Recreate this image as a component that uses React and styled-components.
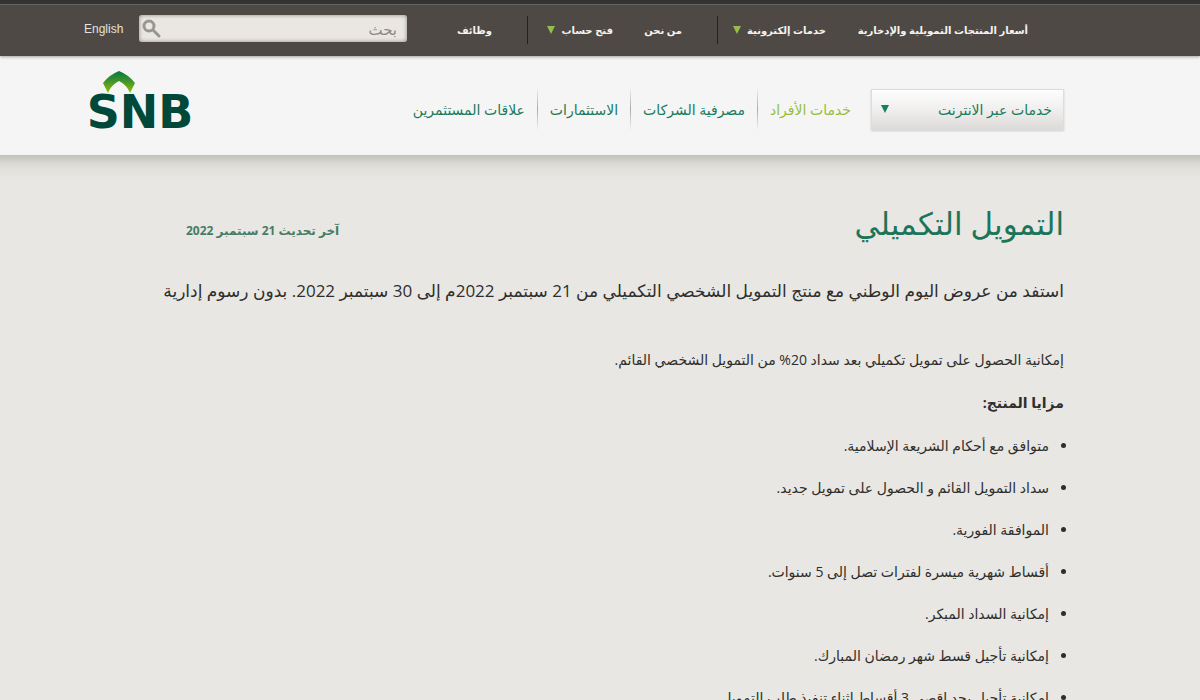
import React, { useState } from 'react'
import styled, { createGlobalStyle } from 'styled-components'

const GlobalStyle = createGlobalStyle`
  * {
    box-sizing: border-box;
  }

  body {
    margin: 0;
    background: #e8e7e3;
    color: #2f2e2c;
    font-family: 'Open Sans', 'DejaVu Sans', sans-serif;
    overflow-x: hidden;
  }
`

const Page = styled.div`
  direction: rtl;
  min-height: 100vh;
  overflow: hidden;
`

const TopBar = styled.div`
  position: relative;
  z-index: 1;
  display: flex;
  align-items: center;
  height: 56px;
  padding: 0 172px 0 84px;
  border-top: 4px solid #333431;
  background: #4e4944;
  box-shadow: inset 0 1px 0 #666561, 0 1px 3px #a5a39f;
`

const TopNav = styled.nav`
  flex: 1;
  display: flex;
  align-items: center;
`

const TopItem = styled.div`
  display: flex;
  align-items: center;
  gap: 6px;
  flex: none;
  width: ${(props) => props.$width}px;
  height: 28px;
  margin-left: ${(props) => (props.$divider ? '35px' : '0')};
  border-left: ${(props) => (props.$divider ? '1px solid #24211f' : 'none')};
`

const TopLink = styled.a`
  color: #f4f3f1;
  font-size: 10px;
  font-weight: 700;
  line-height: 20px;
  text-decoration: none;
  white-space: nowrap;
`

const Arrow = styled.span`
  width: 0;
  height: 0;
  border: 4px solid transparent;
  border-top: 8px solid ${(props) => props.$color};
  border-bottom: 0;
`

const SearchTools = styled.div`
  display: flex;
  align-items: center;
  flex: none;
  padding-bottom: 3px;
`

const SearchBox = styled.label`
  display: flex;
  align-items: center;
  flex: none;
  width: 268px;
  height: 27px;
  padding: 0 10px 0 3px;
  border-radius: 3px;
  background: #eae7e3;
  box-shadow: inset 0 0 4px #8b8781;
`

const SearchInput = styled.input`
  flex: 1;
  min-width: 0;
  padding: 0;
  border: 0;
  outline: 0;
  background: transparent;
  color: #8b8984;
  font-family: inherit;
  font-size: 15px;

  &::placeholder {
    color: #8b8984;
    opacity: 1;
  }
`

const LangLink = styled.a`
  width: 55px;
  padding-right: 16px;
  color: #e4e2df;
  font-family: 'Liberation Sans', Arial, sans-serif;
  font-size: 12px;
  line-height: 20px;
  text-align: right;
  text-decoration: none;
  direction: ltr;
`

const Header = styled.header`
  display: flex;
  align-items: flex-start;
  justify-content: space-between;
  height: 99px;
  padding: 15px 136px 0 84px;
  background: #f5f5f5;
`

const MainNav = styled.nav`
  display: flex;
  align-items: center;
  padding-top: 16px;
`

const ServiceBox = styled.label`
  display: flex;
  align-items: center;
  width: 193px;
  height: 41px;
  margin-left: 8px;
  padding: 0 11px 0 9px;
  border: 1px solid #dedddb;
  background: linear-gradient(#fdfdfd, #f0efee 50%, #dddbd9);
  box-shadow: 0 1px 2px #ccc;
`

const ServiceSelect = styled.select`
  flex: 1;
  appearance: none;
  padding: 0;
  border: 0;
  outline: 0;
  background: transparent;
  color: #1a7a5c;
  font-family: inherit;
  font-size: 14px;
`

const MainLink = styled.a`
  display: flex;
  align-items: center;
  height: 42px;
  padding: 0 12px;
  color: ${(props) => (props.$active ? '#94bf3c' : '#1a7a5c')};
  font-size: 14px;
  text-decoration: none;
  white-space: nowrap;
`

const Divider = styled.span`
  width: 1px;
  height: 44px;
  background: linear-gradient(#f5f5f5, #aaa 50%, #f5f5f5);
`

const Logo = styled.a`
  display: flex;
  flex-direction: column;
  align-items: center;
  width: 112px;
  color: #00493a;
  text-decoration: none;
`

const LogoRoof = styled.svg`
  display: block;
  width: 32px;
  height: 22px;
  margin-right: 42px;
`

const LogoName = styled.span`
  font-family: 'DejaVu Sans', sans-serif;
  font-size: 46px;
  font-weight: 700;
  line-height: 38px;
`

const Content = styled.main`
  padding: 44px 136px 0 84px;
  background: linear-gradient(#c1c0ba, #d6d5d0 7px, #e2e1dd 14px, #e8e7e3 26px);
`

const TitleRow = styled.div`
  display: flex;
  align-items: baseline;
  justify-content: space-between;
  height: 56px;
  padding-left: 102px;
`

const Title = styled.h1`
  margin: 0;
  color: #1c7559;
  font-size: 31px;
  font-weight: 400;
  line-height: 48px;
`

const Updated = styled.p`
  margin: 0;
  color: #457c66;
  font-size: 12px;
  font-weight: 700;
`

const Lead = styled.p`
  margin: 24px 0 0;
  font-size: 17px;
  line-height: 24px;
  white-space: nowrap;
`

const Text = styled.p`
  margin: 46px 0 0;
  font-size: 14px;
  line-height: 22px;
`

const SubTitle = styled.h2`
  margin: 21px 0 0;
  font-size: 14px;
  font-weight: 700;
  line-height: 22px;
`

const List = styled.ul`
  display: flex;
  flex-direction: column;
  gap: 20px;
  margin: 21px 0 0;
  padding: 0 15px 0 0;
  font-size: 14px;
  line-height: 22px;
`

const topLinks = [
  { label: 'أسعار المنتجات التمويلية والإدخارية', width: 202 },
  { label: 'خدمات إلكترونية', width: 109, arrow: true, divider: true },
  { label: 'من نحن', width: 69 },
  { label: 'فتح حساب', width: 86, arrow: true, divider: true },
  { label: 'وظائف', width: 40 },
]

const mainLinks = ['خدمات الأفراد', 'مصرفية الشركات', 'الاستثمارات', 'علاقات المستثمرين']

const benefits = [
  'متوافق مع أحكام الشريعة الإسلامية.',
  'سداد التمويل القائم و الحصول على تمويل جديد.',
  'الموافقة الفورية.',
  'أقساط شهرية ميسرة لفترات تصل إلى 5 سنوات.',
  'إمكانية السداد المبكر.',
  'إمكانية تأجيل قسط شهر رمضان المبارك.',
  'إمكانية تأجيل بحد اقصى 3 أقساط اثناء تنفيذ طلب التمويل.',
]

const SnbLogo = () => (
  <Logo href="#" aria-label="SNB">
    <LogoRoof viewBox="0 0 32 22">
      <defs>
        <linearGradient id="roof" x1="0" y1="0" x2="0" y2="1">
          <stop offset="0" stopColor="#04783f" />
          <stop offset="0.5" stopColor="#479528" />
          <stop offset="1" stopColor="#8fc400" />
        </linearGradient>
      </defs>
      <path fill="url(#roof)" d="M0 12 Q6 4 16 0 Q26 4 32 12 L27 22 Q24 14 16 10 Q8 14 5 22 Z" />
    </LogoRoof>
    <LogoName>SNB</LogoName>
  </Logo>
)

const App = () => {
  const [search, setSearch] = useState('')

  return (
    <Page dir="rtl" lang="ar">
      <GlobalStyle />
      <TopBar>
        <TopNav>
          {topLinks.map((item) => (
            <TopItem key={item.label} $width={item.width} $divider={item.divider}>
              <TopLink href="#">{item.label}</TopLink>
              {item.arrow && <Arrow $color="#94bd4c" />}
            </TopItem>
          ))}
        </TopNav>
        <SearchTools>
          <SearchBox>
            <SearchInput
              type="text"
              aria-label="بحث"
              placeholder="بحث"
              value={search}
              onChange={(e) => setSearch(e.target.value)}
            />
            <svg width="20" height="20" viewBox="0 0 20 20" fill="none" stroke="#989693">
              <circle cx="7" cy="7" r="5" strokeWidth="3" />
              <path d="M11 11 L17 17" strokeWidth="3" strokeLinecap="round" />
            </svg>
          </SearchBox>
          <LangLink href="#">English</LangLink>
        </SearchTools>
      </TopBar>

      <Header>
        <MainNav>
          <ServiceBox>
            <ServiceSelect aria-label="خدمات عبر الانترنت">
              <option>خدمات عبر الانترنت</option>
            </ServiceSelect>
            <Arrow $color="#138060" />
          </ServiceBox>
          {mainLinks.map((label, i) => (
            <React.Fragment key={label}>
              {i > 0 && <Divider />}
              <MainLink href="#" $active={i === 0}>{label}</MainLink>
            </React.Fragment>
          ))}
        </MainNav>
        <SnbLogo />
      </Header>

      <Content>
        <TitleRow>
          <Title>التمويل التكميلي</Title>
          <Updated>آخر تحديث 21 سبتمبر 2022</Updated>
        </TitleRow>
        <Lead>
          استفد من عروض اليوم الوطني مع منتج التمويل الشخصي التكميلي من 21 سبتمبر 2022م إلى 30 سبتمبر 2022. بدون رسوم إدارية
        </Lead>
        <Text>إمكانية الحصول على تمويل تكميلي بعد سداد 20% من التمويل الشخصي القائم.</Text>
        <SubTitle>مزايا المنتج:</SubTitle>
        <List>
          {benefits.map((text) => (
            <li key={text}>{text}</li>
          ))}
        </List>
      </Content>
    </Page>
  )
}

export default App
